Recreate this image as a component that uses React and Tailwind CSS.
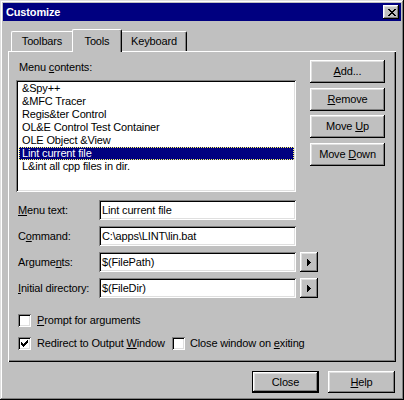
import React from "react";

function CloseX() {
  return (
    <svg width="8" height="7" viewBox="0 0 8 7" shapeRendering="crispEdges">
      <path
        fill="#000"
        d="M0 0h2v1h-2z M6 0h2v1h-2z M1 1h2v1h-2z M5 1h2v1h-2z M2 2h4v1h-4z M3 3h2v1h-2z M2 4h4v1h-4z M1 5h2v1h-2z M5 5h2v1h-2z M0 6h2v1h-2z M6 6h2v1h-2z"
      />
    </svg>
  );
}

function Check() {
  return (
    <svg width="7" height="7" viewBox="0 0 7 7" shapeRendering="crispEdges">
      <path
        fill="#000"
        d="M6 0h1v1h-1z M5 1h2v1h-2z M0 2h1v1h-1z M4 2h3v1h-3z M0 3h2v1h-2z M3 3h3v1h-3z M0 4h5v1h-5z M1 5h3v1h-3z M2 6h1v1h-1z"
      />
    </svg>
  );
}

function Arrow() {
  return (
    <svg width="4" height="7" viewBox="0 0 4 7" shapeRendering="crispEdges">
      <path fill="#000" d="M0 0h1v7h-1z M1 1h1v5h-1z M2 2h1v3h-1z M3 3h1v1h-1z" />
    </svg>
  );
}

function Checkbox({ checked }) {
  return (
    <div className="w-[13px] h-[13px] shrink-0 bg-white flex items-center justify-center shadow-[inset_1px_1px_#808080,inset_-1px_-1px_#fff,inset_2px_2px_#000,inset_-2px_-2px_#dfdfdf]">
      {checked ? <Check /> : null}
    </div>
  );
}

function Btn({ children }) {
  return (
    <div className="w-[75px] h-[23px] flex items-center justify-center bg-[#c0c0c0] shadow-[inset_-1px_-1px_#000,inset_1px_1px_#fff,inset_-2px_-2px_#808080,inset_2px_2px_#dfdfdf]">
      <span>{children}</span>
    </div>
  );
}

const items = [
  "&Spy++",
  "&MFC Tracer",
  "Regis&ter Control",
  "OL&E Control Test Container",
  "OLE Object &View",
  "Lint current file",
  "L&int all cpp files in dir.",
];

function FieldRow({ label, value, arrow, first }) {
  return (
    <div className={`flex items-center h-[20px] ${first ? "mt-[8px]" : "mt-[6px]"}`}>
      <div className="ml-[2px] w-[81px] whitespace-nowrap">{label}</div>
      <div className="w-[197px] h-[20px] bg-white flex items-center pl-[3px] whitespace-nowrap overflow-hidden shadow-[inset_1px_1px_#808080,inset_-1px_-1px_#fff,inset_2px_2px_#000,inset_-2px_-2px_#dfdfdf]">
        {value}
      </div>
      {arrow ? (
        <div className="ml-[4px] w-[18px] h-[20px] flex items-center justify-center bg-[#c0c0c0] shadow-[inset_-1px_-1px_#000,inset_1px_1px_#fff,inset_-2px_-2px_#808080,inset_2px_2px_#dfdfdf]">
          <Arrow />
        </div>
      ) : null}
    </div>
  );
}

export default function App() {
  return (
    <div className="w-[404px] h-[400px] bg-[#c0c0c0] p-[3px] flex flex-col text-[11px] leading-[13px] tracking-[-0.15px] text-black [font-family:'Liberation_Sans',Arial,sans-serif] shadow-[inset_-1px_-1px_#000,inset_1px_1px_#dfdfdf,inset_-2px_-2px_#808080,inset_2px_2px_#fff]">
      {/* Title bar */}
      <div className="h-[18px] shrink-0 bg-[#000080] flex items-center justify-between pl-[3px] pr-[2px]">
        <span className="text-white font-bold text-[11px]">Customize</span>
        <div className="w-[16px] h-[14px] bg-[#c0c0c0] flex items-center justify-center pl-[1px] shadow-[inset_-1px_-1px_#000,inset_1px_1px_#fff,inset_-2px_-2px_#808080,inset_2px_2px_#dfdfdf]">
          <CloseX />
        </div>
      </div>

      {/* Tabs */}
      <div className="mt-[8px] ml-[8px] h-[22px] shrink-0 flex items-end relative z-10">
        <div className="w-[61px] h-[20px] border-l border-t border-white rounded-tl-[2px] flex items-center justify-center">
          Toolbars
        </div>
        <div className="w-[50px] h-[23px] -mb-[1px] bg-[#c0c0c0] border-l border-t border-r border-l-white border-t-white border-r-black rounded-t-[2px] shadow-[inset_-1px_0_#808080] flex items-center justify-center">
          Tools
        </div>
        <div className="w-[65px] h-[20px] border-t border-r border-t-white border-r-black rounded-tr-[2px] shadow-[inset_-1px_0_#808080] flex items-center justify-center">
          Keyboard
        </div>
      </div>

      {/* Panel */}
      <div className="mx-[5px] h-[311px] shrink-0 bg-[#c0c0c0] pt-[9px] pl-[8px] flex flex-col shadow-[inset_1px_1px_#fff,inset_-1px_-1px_#000,inset_-2px_-2px_#808080]">
        <div className="flex">
          <div className="flex flex-col w-[280px]">
            <div className="h-[13px] mt-[1px] pl-[3px]">
              Menu <u>c</u>ontents:
            </div>
            <div className="mt-[6px] h-[112px] bg-white pt-[2px] pl-[3px] pr-[2px] shadow-[inset_1px_1px_#808080,inset_-1px_-1px_#fff,inset_2px_2px_#000,inset_-2px_-2px_#dfdfdf]">
              {items.map((t, i) =>
                i === 5 ? (
                  <div
                    key={i}
                    className="h-[13px] leading-[11px] bg-[#000080] text-white border border-dotted border-[#ffff60] pl-[2px] whitespace-nowrap"
                  >
                    {t}
                  </div>
                ) : (
                  <div
                    key={i}
                    className="h-[13px] leading-[11px] border border-transparent pl-[2px] whitespace-nowrap"
                  >
                    {t}
                  </div>
                )
              )}
            </div>
          </div>
          <div className="ml-[14px] flex flex-col">
            <Btn>
              <u>A</u>dd...
            </Btn>
            <div className="mt-[5px]">
              <Btn>
                <u>R</u>emove
              </Btn>
            </div>
            <div className="mt-[4px]">
              <Btn>
                Move <u>U</u>p
              </Btn>
            </div>
            <div className="mt-[5px]">
              <Btn>
                Move <u>D</u>own
              </Btn>
            </div>
          </div>
        </div>

        <FieldRow first label={<><u>M</u>enu text:</>} value="Lint current file" />
        <FieldRow label={<>C<u>o</u>mmand:</>} value="C:\apps\LINT\lin.bat" />
        <FieldRow label={<>Argume<u>n</u>ts:</>} value="$(FilePath)" arrow />
        <FieldRow label={<><u>I</u>nitial directory:</>} value="$(FileDir)" arrow />

        <div className="mt-[16px] h-[13px] flex items-center">
          <div className="ml-[2px] flex items-center">
            <Checkbox />
            <span className="ml-[6px] whitespace-nowrap">
              <u>P</u>rompt for arguments
            </span>
          </div>
        </div>
        <div className="mt-[10px] h-[13px] flex items-center">
          <div className="ml-[2px] w-[154px] flex items-center">
            <Checkbox checked />
            <span className="ml-[6px] whitespace-nowrap">
              Redirect to Output <u>W</u>indow
            </span>
          </div>
          <div className="flex items-center">
            <Checkbox />
            <span className="ml-[5px] whitespace-nowrap">
              Close window on <u>e</u>xiting
            </span>
          </div>
        </div>
      </div>

      {/* Bottom buttons */}
      <div className="mt-[9px] flex justify-end pr-[6px] gap-[9px]">
        <div className="w-[67px] h-[22px] border border-black flex items-center justify-center bg-[#c0c0c0] shadow-[inset_-1px_-1px_#000,inset_1px_1px_#fff,inset_-2px_-2px_#808080,inset_2px_2px_#dfdfdf]">
          Close
        </div>
        <div className="w-[67px] h-[22px] flex items-center justify-center bg-[#c0c0c0] shadow-[inset_-1px_-1px_#000,inset_1px_1px_#fff,inset_-2px_-2px_#808080,inset_2px_2px_#dfdfdf]">
          <span>
            <u>H</u>elp
          </span>
        </div>
      </div>
    </div>
  );
}
